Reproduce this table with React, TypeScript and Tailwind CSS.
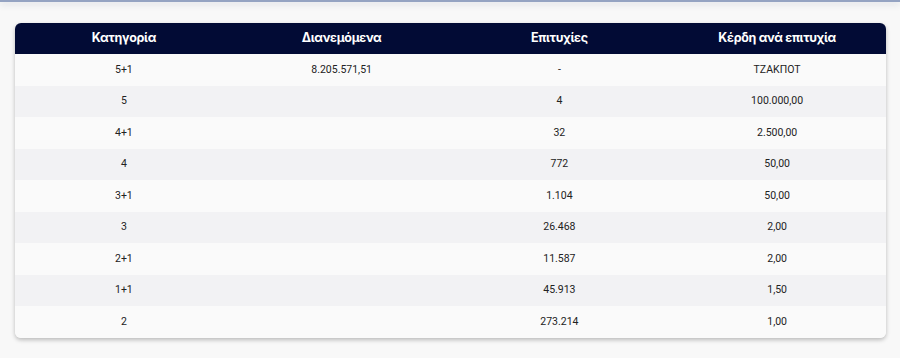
const rows = [
  ["5+1", "8.205.571,51", "-", "ΤΖΑΚΠΟΤ"],
  ["5", "", "4", "100.000,00"],
  ["4+1", "", "32", "2.500,00"],
  ["4", "", "772", "50,00"],
  ["3+1", "", "1.104", "50,00"],
  ["3", "", "26.468", "2,00"],
  ["2+1", "", "11.587", "2,00"],
  ["1+1", "", "45.913", "1,50"],
  ["2", "", "273.214", "1,00"],
];

const headers = ["Κατηγορία", "Διανεμόμενα", "Επιτυχίες", "Κέρδη ανά επιτυχία"];

export default function App() {
  return (
    <div className="w-[900px] h-[358px] bg-[#f8f8f8] font-['Roboto',sans-serif] overflow-hidden">
      <div className="h-[2px] bg-[#94a3c2] shadow-[0_2px_6px_rgba(60,80,120,0.25)]" />
      <div className="pt-[21px] pl-[15px] pr-[14px]">
        <div className="rounded-md overflow-hidden shadow-[0_2px_4px_rgba(0,0,0,0.25)] bg-[#fafafa]">
          <div className="grid grid-cols-4 bg-[#020b35] h-[31px] items-center">
            {headers.map((h) => (
              <div key={h} className="text-center text-white text-[12.5px] font-bold font-['Inter',sans-serif] tracking-[-0.3px]">
                {h}
              </div>
            ))}
          </div>
          {rows.map((r, i) => (
            <div
              key={i}
              className={`grid grid-cols-4 h-[31.5px] items-center ${i % 2 === 0 ? "bg-[#fafafa]" : "bg-[#f2f2f4]"}`}
            >
              {r.map((c, j) => (
                <div key={j} className="text-center text-[10.5px] text-[#222]">
                  {c}
                </div>
              ))}
            </div>
          ))}
        </div>
      </div>
    </div>
  );
}
